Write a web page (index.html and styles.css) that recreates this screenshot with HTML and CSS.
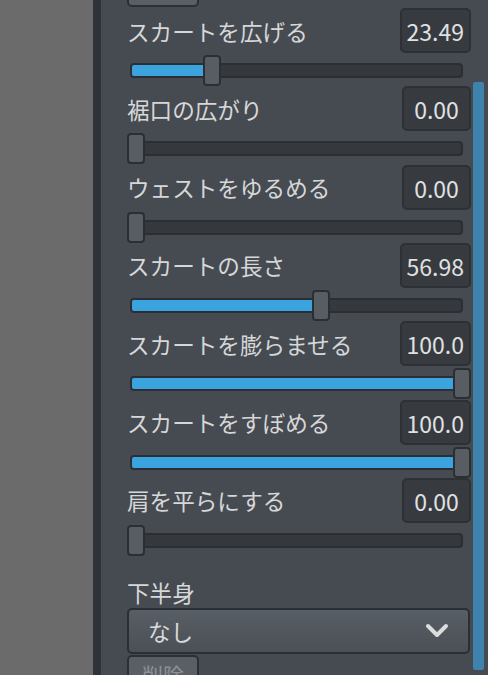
FILE: index.html
```html
<!DOCTYPE html>
<html lang="ja">
<head>
<meta charset="utf-8">
<title>Skirt settings</title>
<link rel="stylesheet" href="styles.css">
</head>
<body>
<div class="app">
  <div class="viewport"></div>
  <div class="divider"></div>
  <div class="panel">
    <div class="content">
      <button class="btn btn-top">削除</button>

      <div class="row">
        <div class="row-head"><span class="label">スカートを広げる</span><span class="value">23.49</span></div>
        <div class="slider"><div class="track"><div class="fill" style="width:77px"></div></div><div class="handle" style="left:76px"></div></div>
      </div>
      <div class="row">
        <div class="row-head"><span class="label">裾口の広がり</span><span class="value">0.00</span></div>
        <div class="slider"><div class="track"></div><div class="handle" style="left:0px"></div></div>
      </div>
      <div class="row">
        <div class="row-head"><span class="label">ウェストをゆるめる</span><span class="value">0.00</span></div>
        <div class="slider"><div class="track"></div><div class="handle" style="left:0px"></div></div>
      </div>
      <div class="row">
        <div class="row-head"><span class="label">スカートの長さ</span><span class="value">56.98</span></div>
        <div class="slider"><div class="track"><div class="fill" style="width:186px"></div></div><div class="handle" style="left:185px"></div></div>
      </div>
      <div class="row">
        <div class="row-head"><span class="label">スカートを膨らませる</span><span class="value">100.0</span></div>
        <div class="slider"><div class="track"><div class="fill" style="width:323px"></div></div><div class="handle" style="left:326px"></div></div>
      </div>
      <div class="row">
        <div class="row-head"><span class="label">スカートをすぼめる</span><span class="value">100.0</span></div>
        <div class="slider"><div class="track"><div class="fill" style="width:323px"></div></div><div class="handle" style="left:326px"></div></div>
      </div>
      <div class="row">
        <div class="row-head"><span class="label">肩を平らにする</span><span class="value">0.00</span></div>
        <div class="slider"><div class="track"></div><div class="handle" style="left:0px"></div></div>
      </div>

      <div class="section">
        <div class="section-label">下半身</div>
        <div class="select">
          <span class="select-text">なし</span>
          <svg class="chevron" width="24" height="16" viewBox="0 0 24 16"><polyline points="3,3 12,12 21,3" fill="none" stroke="#dcdcdc" stroke-width="4" stroke-linecap="round" stroke-linejoin="round"/></svg>
        </div>
        <button class="btn">削除</button>
      </div>
    </div>
    <div class="scrollbar"></div>
  </div>
</div>
</body>
</html>
```

FILE: styles.css
```css
html, body {
  margin: 0;
  padding: 0;
  height: 100%;
  overflow: hidden;
  background: #6b6b6b;
}

.app {
  display: flex;
  height: 675px;
  width: 488px;
  font-family: "Noto Sans CJK JP", "Noto Sans", sans-serif;
}

.viewport {
  width: 93px;
  background: #6b6b6b;
}

.divider {
  width: 8px;
  background: #2f3337;
}

.panel {
  position: relative;
  flex: 1;
  background: #464b52;
  overflow: hidden;
}

.content {
  width: 343px;
  margin-left: 26px;
  margin-top: -31px;
  display: flex;
  flex-direction: column;
}

.btn {
  box-sizing: border-box;
  width: 72px;
  height: 38px;
  background: #5a5f66;
  border: 2px solid #2c2f33;
  border-radius: 5px;
  color: #8b9097;
  font-family: "Noto Sans CJK JP", sans-serif;
  font-size: 21px;
  padding: 0;
  line-height: 34px;
}

.btn-top {
  margin-bottom: 1px;
}

.row {
  height: 78.33px;
  display: flex;
  flex-direction: column;
}

.row-head {
  height: 45px;
  display: flex;
  align-items: center;
  justify-content: space-between;
}

.label {
  color: #d6d7d8;
  font-size: 22.6px;
  line-height: 30px;
  padding-top: 2px;
}

.value {
  box-sizing: border-box;
  min-width: 69px;
  height: 45px;
  padding: 0 5px;
  background: #373b40;
  border: 2px solid #2d3034;
  border-radius: 5px;
  color: #e0e1e2;
  font-size: 23px;
  line-height: 42px;
  text-align: center;
  margin-right: -1px;
}

.slider {
  position: relative;
  height: 30px;
  margin-top: 2px;
}

.track {
  box-sizing: border-box;
  margin: 8px 7px 0 3px;
  height: 15px;
  background: #35393e;
  border: 2px solid #2b2e32;
  border-radius: 4px;
  overflow: hidden;
}

.fill {
  height: 100%;
  background: #3ba3de;
}

.handle {
  position: absolute;
  top: 0;
  box-sizing: border-box;
  width: 18px;
  height: 31px;
  background: #585d64;
  border: 2px solid #2b2e32;
  border-radius: 4px;
}

.section {
  margin-top: 22px;
  display: flex;
  flex-direction: column;
  align-items: flex-start;
}

.section-label {
  color: #d6d7d8;
  font-size: 22.6px;
  line-height: 30px;
  height: 30px;
}

.select {
  box-sizing: border-box;
  width: 343px;
  height: 46px;
  margin-bottom: 1px;
  display: flex;
  align-items: center;
  justify-content: space-between;
  padding: 0 19px 0 19px;
  background: linear-gradient(#585e65, #4b5056);
  border: 2px solid #2b2e32;
  border-radius: 5px;
}

.select-text {
  color: #d8d9da;
  font-size: 22.6px;
  line-height: 30px;
  padding-top: 2px;
}

.chevron {
  display: block;
}

.scrollbar {
  position: absolute;
  right: 4px;
  top: 82px;
  width: 11px;
  height: 588px;
  background: #3d83ae;
  border-radius: 2px;
}
```
